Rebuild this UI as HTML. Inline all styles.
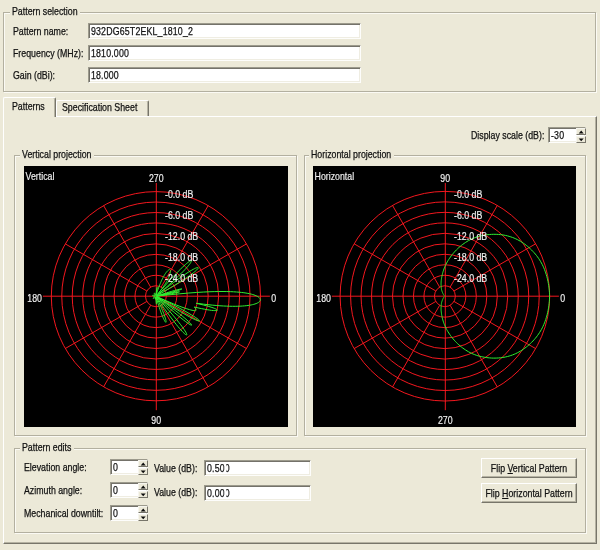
<!DOCTYPE html>
<html><head><meta charset="utf-8"><title>Antenna pattern</title>
<style>
html,body{margin:0;padding:0}
body{width:600px;height:550px;background:#ECE9D8;position:relative;overflow:hidden;font-family:"Liberation Sans",sans-serif;font-size:10.5px;color:#111;-webkit-text-stroke:0.25px #111}
div,span,svg{position:absolute;box-sizing:border-box}
.lab{height:12px;line-height:12px;white-space:nowrap;transform:scaleX(0.838);transform-origin:0 50%}
.grp{border:1px solid #b3b0a0;box-shadow:1px 1px 0 #fbfaf4, inset 1px 1px 0 #fbfaf4}
.gl{height:12px;line-height:12px;padding:0 2px;background:#ECE9D8;white-space:nowrap}
.gl b{font-weight:normal;position:absolute;left:2px;top:0;transform:scaleX(0.838);transform-origin:0 50%;white-space:nowrap}
.sunk{background:#fff;border-top:1px solid #9c9a8c;border-left:1px solid #9c9a8c;border-right:1px solid #fdfdfb;border-bottom:1px solid #fdfdfb;box-shadow:inset 1px 1px 0 #74726a, inset -1px -1px 0 #efede2}
.it{left:2px;top:0.8px;bottom:0;margin:auto;height:12px;line-height:12px;white-space:nowrap;letter-spacing:0.2px;transform:scaleX(0.838);transform-origin:0 50%}
.ud{right:-1px;width:10.5px;height:7.2px;background:#ECE9D8;border-top:1px solid #f6f5ee;border-left:1px solid #f6f5ee;border-right:1px solid #77756a;border-bottom:1px solid #77756a}
.ud svg{left:0;top:0}
.it b{position:relative;font-weight:normal}
.it b i{position:absolute;left:-0.5px;top:0;bottom:0;width:2.2px;background:#fff}
.btn{background:#ECE9D8;border-top:1px solid #fff;border-left:1px solid #fff;border-right:1px solid #77756a;border-bottom:1px solid #77756a;box-shadow:inset -1px -1px 0 #b5b2a2}
.btn span{left:-20px;right:-20px;top:0;bottom:0;margin:auto;height:12px;line-height:12px;text-align:center;white-space:nowrap;transform:scaleX(0.838)}
u{text-decoration:underline;text-underline-offset:1px}
.plot{display:block}
svg text{font-family:"Liberation Sans",sans-serif}
.panel{left:3px;top:116px;width:594px;height:428px;border-top:1px solid #fff;border-left:1px solid #fff;border-right:1px solid #77756a;border-bottom:1px solid #77756a;box-shadow:inset -1px -1px 0 #b5b2a2}
.tab{background:#ECE9D8;border-top:1px solid #fff;border-left:1px solid #fff;border-right:1px solid #77756a;box-shadow:inset -1px 0 0 #b5b2a2;border-radius:2px 2px 0 0}
.tab span{white-space:nowrap;height:12px;line-height:12px;transform:scaleX(0.838);transform-origin:0 50%}
</style></head><body><div id="w" style="left:0;top:0;width:600px;height:550px;will-change:transform">
<div class="grp" style="left:3px;top:12px;width:593px;height:80px"></div><div class="gl" style="left:10px;top:5px;width:70px"><b>Pattern selection</b></div>
<div class="lab" style="left:13px;top:25px;">Pattern name:</div>
<div class="lab" style="left:13px;top:47px;">Frequency (MHz):</div>
<div class="lab" style="left:13px;top:69px;">Gain (dBi):</div>
<div class="sunk" style="left:88px;top:23px;width:273px;height:16px"><span class="it">932DG65T2EKL_1810_2</span></div>
<div class="sunk" style="left:88px;top:45px;width:273px;height:16px"><span class="it">1810.000</span></div>
<div class="sunk" style="left:88px;top:67px;width:273px;height:16px"><span class="it">18.000</span></div>
<div class="panel"></div>
<div class="tab" style="left:56px;top:100px;width:93px;height:16px"><span style="left:5px;top:-0.5px">Specification Sheet</span></div>
<div class="tab" style="left:3px;top:97px;width:53px;height:20px"><span style="left:8px;top:2px">Patterns</span></div>
<div class="lab" style="left:471px;top:128.5px;">Display scale (dB):</div>
<div class="sunk" style="left:548px;top:127px;width:38px;height:16px"><span class="it">-30</span><div class="ud" style="top:0px"><svg width="9" height="6" viewBox="0 0 9 6"><path d="M1.7 4.4L4.2 1.6L6.7 4.4Z" fill="#0a0a0a"/></svg></div><div class="ud" style="bottom:-1px"><svg width="9" height="6" viewBox="0 0 9 6"><path d="M1.7 1.5L4.2 4.3L6.7 1.5Z" fill="#0a0a0a"/></svg></div></div>
<div class="grp" style="left:14px;top:155px;width:283px;height:281px"></div><div class="gl" style="left:20px;top:148px;width:74px"><b>Vertical projection</b></div>
<div class="grp" style="left:304px;top:155px;width:282px;height:281px"></div><div class="gl" style="left:308.5px;top:148px;width:85px"><b>Horizontal projection</b></div>
<svg class="plot" style="left:24px;top:166px" width="264" height="261" viewBox="0 0 264 261">
<rect width="264" height="261" fill="#000"/>
<g fill="none" stroke="#ff1820" stroke-width="0.95">
<circle cx="131.90" cy="130.20" r="10.46"/>
<circle cx="131.90" cy="130.20" r="20.92"/>
<circle cx="131.90" cy="130.20" r="31.38"/>
<circle cx="131.90" cy="130.20" r="41.84"/>
<circle cx="131.90" cy="130.20" r="52.30"/>
<circle cx="131.90" cy="130.20" r="62.76"/>
<circle cx="131.90" cy="130.20" r="73.22"/>
<circle cx="131.90" cy="130.20" r="83.68"/>
<circle cx="131.90" cy="130.20" r="94.14"/>
<circle cx="131.90" cy="130.20" r="104.60"/>
<path d="M18.90 130.20H245.90M132.30 17.00V244.20"/>
<path d="M140.96 124.97L222.49 77.90M137.13 121.14L184.20 39.61M126.67 121.14L79.60 39.61M122.84 124.97L41.31 77.90M122.84 135.43L41.31 182.50M126.67 139.26L79.60 220.79M137.13 139.26L184.20 220.79M140.96 135.43L222.49 182.50"/>
</g>
<path d="M129.90 130.20L130.44 130.28L130.91 130.30L131.11 130.33L131.12 130.37L131.13 130.41L131.14 130.45L130.80 130.62L130.36 130.89L129.91 131.21L129.52 131.57L129.25 131.92L129.13 132.21L129.18 132.40L129.40 132.46L129.74 132.36L130.15 132.14L130.59 131.82L131.00 131.44L131.32 131.09L131.50 130.89L131.54 130.91L131.57 130.93L131.61 130.95L131.55 131.26L131.48 131.76L131.45 132.31L131.48 132.85L131.57 133.30L131.86 131.00L131.86 131.00L131.87 131.00L131.87 131.00L131.87 131.00L131.88 131.00L131.88 131.00L131.88 131.00L131.89 131.00L131.89 131.00L131.89 131.00L131.90 131.00L131.90 131.00L131.90 131.00L131.91 131.00L131.91 131.00L131.91 131.00L131.92 131.00L131.92 131.00L131.95 132.00L132.01 133.35L132.07 134.52L132.13 135.52L132.20 136.35L132.26 137.02L132.32 137.53L132.37 137.89L132.42 138.11L132.46 138.18L132.49 138.11L132.50 137.89L132.51 137.52L132.49 137.00L132.46 136.33L132.41 135.50L132.33 134.50L132.23 133.34L132.10 131.99L131.99 130.99L131.99 130.99L132.00 130.99L132.00 130.99L132.00 130.99L132.01 130.99L132.01 130.99L132.01 130.99L132.02 130.99L132.02 130.99L132.03 130.99L132.03 130.99L132.03 130.99L132.04 130.99L132.04 130.99L132.04 130.99L132.05 130.99L132.05 130.99L132.05 130.99L132.06 130.98L132.06 130.98L132.06 130.98L132.07 130.98L132.07 130.98L132.07 130.98L132.08 130.98L132.08 130.98L132.08 130.98L132.09 130.98L132.09 130.98L132.09 130.98L132.10 130.98L132.10 130.97L132.10 130.97L132.11 130.97L132.11 130.97L132.11 130.97L132.46 132.18L133.23 134.83L133.96 137.27L134.66 139.52L135.33 141.59L135.96 143.49L136.57 145.23L137.14 146.82L137.68 148.26L138.19 149.57L138.68 150.75L139.13 151.80L139.55 152.74L139.94 153.56L140.30 154.26L140.63 154.86L140.93 155.36L141.20 155.75L141.43 156.04L141.64 156.24L141.80 156.34L141.93 156.34L142.03 156.25L142.09 156.06L142.11 155.78L142.09 155.41L142.02 154.94L141.91 154.37L141.76 153.70L141.55 152.94L141.29 152.07L140.98 151.09L140.61 150.00L140.18 148.81L139.69 147.49L139.12 146.05L138.49 144.49L137.77 142.79L136.97 140.96L136.08 138.97L135.10 136.83L134.01 134.53L132.81 132.04L132.26 130.92L132.26 130.91L132.26 130.91L132.27 130.91L132.27 130.91L132.27 130.91L132.28 130.91L132.28 130.90L132.28 130.90L132.28 130.90L132.29 130.90L132.29 130.90L132.29 130.90L132.30 130.89L132.30 130.89L132.30 130.89L132.31 130.89L132.31 130.89L132.31 130.89L132.32 130.88L132.32 130.88L132.32 130.88L132.32 130.88L132.33 130.88L132.33 130.87L132.33 130.87L132.34 130.87L132.34 130.87L132.34 130.87L132.34 130.87L133.54 132.63L137.07 137.79L140.24 142.33L143.09 146.34L145.69 149.89L148.04 153.03L150.17 155.82L152.11 158.27L153.85 160.42L155.43 162.29L156.83 163.89L158.08 165.26L159.17 166.39L160.12 167.31L160.92 168.02L161.58 168.53L162.10 168.85L162.47 168.98L162.71 168.94L162.81 168.72L162.77 168.32L162.57 167.74L162.22 166.98L161.71 166.04L161.03 164.91L160.17 163.59L159.12 162.07L157.87 160.34L156.40 158.39L154.70 156.20L152.75 153.77L150.52 151.06L147.98 148.06L145.11 144.74L141.84 141.05L138.13 136.94L133.90 132.34L132.45 130.78L132.45 130.78L132.45 130.78L132.46 130.78L132.46 130.77L132.46 130.77L132.46 130.77L132.47 130.77L132.47 130.76L132.47 130.76L132.47 130.76L132.48 130.76L132.48 130.75L132.48 130.75L132.48 130.75L132.49 130.75L132.49 130.74L132.49 130.74L135.40 133.38L141.25 138.62L146.15 142.92L150.31 146.49L153.86 149.45L156.88 151.92L159.45 153.94L161.61 155.58L163.41 156.87L164.86 157.86L166.00 158.56L166.83 159.00L167.38 159.19L167.65 159.15L167.63 158.88L167.33 158.38L166.73 157.65L165.80 156.69L164.54 155.47L162.90 153.99L160.85 152.21L158.34 150.12L155.30 147.67L151.66 144.82L147.30 141.49L142.08 137.59L135.74 132.97L132.55 130.66L132.55 130.66L132.56 130.66L132.56 130.66L132.56 130.65L132.56 130.65L132.56 130.65L132.57 130.64L132.57 130.64L134.31 131.78L141.15 136.20L146.93 139.87L151.89 142.94L156.18 145.52L159.89 147.69L163.09 149.50L165.85 151.00L168.20 152.23L170.18 153.20L171.82 153.95L173.13 154.48L174.13 154.83L174.84 154.99L175.26 154.98L175.40 154.81L175.24 154.47L174.80 153.98L174.06 153.33L172.99 152.51L171.58 151.52L169.81 150.36L167.64 149.00L165.03 147.45L161.93 145.67L158.29 143.65L154.01 141.35L149.00 138.73L143.10 135.72L136.06 132.23L132.62 130.55L132.62 130.54L132.62 130.54L132.63 130.54L132.63 130.53L132.63 130.53L137.50 132.72L142.03 134.71L146.01 136.41L149.54 137.87L152.68 139.13L155.48 140.21L157.98 141.14L160.21 141.93L162.20 142.59L163.96 143.15L165.51 143.61L166.87 143.97L168.05 144.26L169.06 144.46L169.91 144.60L170.61 144.67L171.16 144.68L171.56 144.64L171.83 144.54L171.96 144.39L172.01 144.21L172.03 144.02L172.03 143.82L172.00 143.62L171.94 143.40L171.86 143.18L171.75 142.96L171.61 142.72L171.44 142.48L171.24 142.23L171.01 141.97L170.75 141.71L170.46 141.44L170.13 141.16L170.31 141.03L174.02 141.88L177.39 142.60L180.44 143.20L183.15 143.69L185.55 144.07L187.62 144.35L189.37 144.53L190.80 144.61L191.91 144.61L192.71 144.52L193.18 144.35L193.34 144.10L193.16 143.78L192.64 143.39L191.78 142.93L190.58 142.40L189.02 141.82L187.12 141.18L184.86 140.50L182.25 139.76L179.28 138.98L175.94 138.16L172.22 137.31L174.47 137.51L179.42 138.15L184.00 138.68L188.25 139.13L192.22 139.48L195.93 139.77L199.40 139.99L202.65 140.14L205.70 140.24L208.56 140.29L211.24 140.29L213.75 140.25L216.10 140.17L218.30 140.04L220.34 139.89L222.25 139.70L224.01 139.48L225.65 139.23L227.16 138.95L228.54 138.65L229.80 138.33L230.94 137.99L231.97 137.64L232.88 137.26L233.68 136.87L234.38 136.47L234.97 136.05L235.45 135.63L235.83 135.19L236.10 134.75L236.27 134.30L236.34 133.85L236.30 133.39L236.16 132.93L235.92 132.47L235.57 132.01L235.12 131.55L234.55 131.10L233.88 130.64L233.09 130.20L232.17 129.76L231.14 129.33L229.98 128.92L228.68 128.51L227.24 128.12L225.65 127.75L223.90 127.39L221.99 127.05L219.91 126.74L217.63 126.46L215.16 126.20L212.46 125.98L209.53 125.79L206.33 125.65L202.84 125.55L199.03 125.51L194.83 125.52L190.20 125.61L185.04 125.78L179.22 126.06L172.57 126.46L164.76 127.04L155.26 127.85L142.94 129.04L132.70 130.11L132.69 130.11L132.69 130.11L132.69 130.10L132.69 130.10L132.69 130.10L132.69 130.09L132.69 130.09L132.69 130.09L132.69 130.08L136.40 129.51L143.02 128.44L147.65 127.63L150.88 127.02L153.08 126.56L154.49 126.22L155.26 125.98L155.50 125.83L155.23 125.77L154.42 125.82L152.98 126.01L150.76 126.36L147.53 126.95L142.92 127.86L136.35 129.23L132.68 130.03L132.68 130.02L132.68 130.02L132.68 130.02L138.29 128.67L143.92 127.26L148.19 126.14L151.43 125.24L153.85 124.52L155.61 123.96L156.82 123.52L157.56 123.20L157.89 122.99L157.82 122.89L157.35 122.90L156.46 123.04L155.10 123.33L153.18 123.79L150.59 124.48L147.18 125.46L142.72 126.79L136.85 128.62L132.66 129.95L132.66 129.95L132.66 129.95L132.66 129.94L132.66 129.94L132.66 129.94L132.65 129.93L132.65 129.93L132.65 129.93L132.65 129.92L132.65 129.92L132.65 129.92L132.65 129.91L132.65 129.91L132.64 129.91L132.64 129.90L132.64 129.90L132.64 129.90L132.64 129.89L132.64 129.89L132.64 129.89L132.64 129.88L132.63 129.88L132.63 129.88L132.63 129.87L132.63 129.87L132.63 129.87L132.63 129.87L132.63 129.86L132.62 129.86L132.62 129.86L132.62 129.85L132.62 129.85L132.62 129.85L132.62 129.84L132.61 129.84L132.61 129.84L132.61 129.83L132.61 129.83L132.61 129.83L132.61 129.82L132.60 129.82L132.60 129.82L132.60 129.82L132.60 129.81L132.60 129.81L134.84 128.54L141.35 124.80L146.75 121.63L151.31 118.88L155.21 116.47L158.57 114.34L161.46 112.44L163.96 110.75L166.10 109.24L167.93 107.90L169.49 106.71L170.78 105.67L171.85 104.75L172.70 103.96L173.35 103.28L173.82 102.72L174.10 102.27L174.22 101.92L174.18 101.68L173.98 101.55L173.61 101.53L173.08 101.63L172.39 101.85L171.51 102.20L170.46 102.69L169.21 103.34L167.76 104.15L166.07 105.14L164.14 106.34L161.94 107.76L159.44 109.45L156.60 111.42L153.36 113.73L149.67 116.44L145.41 119.65L140.45 123.46L134.54 128.10L132.52 129.70L132.52 129.70L132.52 129.69L132.52 129.69L132.52 129.69L132.51 129.69L132.51 129.68L133.70 128.66L139.39 123.75L144.08 119.61L148.04 116.04L151.41 112.94L154.30 110.20L156.79 107.79L158.92 105.66L160.74 103.78L162.28 102.11L163.58 100.66L164.66 99.38L165.53 98.28L166.22 97.35L166.73 96.56L167.09 95.92L167.29 95.43L167.34 95.07L167.26 94.84L167.03 94.76L166.67 94.81L166.18 95.01L165.54 95.37L164.75 95.88L163.82 96.57L162.72 97.44L161.44 98.52L159.99 99.82L158.32 101.36L156.44 103.18L154.31 105.31L151.90 107.80L149.16 110.69L146.06 114.06L142.49 118.02L138.35 122.71L133.44 128.40L133.89 127.85L134.62 126.95L135.33 126.07L136.02 125.21L136.67 124.36L137.30 123.53L137.91 122.71L138.49 121.92L139.04 121.14L139.58 120.37L140.09 119.62L140.58 118.89L141.04 118.18L141.48 117.48L141.91 116.80L142.31 116.14L142.69 115.49L143.05 114.86L143.39 114.24L143.71 113.64L144.01 113.06L144.29 112.50L144.56 111.95L144.81 111.42L145.04 110.91L145.25 110.41L145.44 109.93L145.62 109.47L145.79 109.02L145.93 108.59L146.06 108.18L146.18 107.78L146.28 107.41L146.37 107.05L146.44 106.70L146.50 106.38L146.54 106.07L146.57 105.78L146.59 105.51L146.59 105.26L146.59 105.02L146.56 104.80L146.53 104.60L146.49 104.42L146.43 104.25L146.36 104.11L146.28 103.98L146.19 103.87L146.09 103.78L145.98 103.71L145.86 103.66L145.73 103.63L145.59 103.63L145.43 103.64L145.26 103.68L145.09 103.75L144.90 103.83L144.71 103.94L144.50 104.08L144.29 104.23L144.06 104.41L143.83 104.62L143.59 104.84L143.34 105.10L143.08 105.38L142.82 105.68L142.55 106.01L142.27 106.36L141.98 106.74L141.69 107.14L141.39 107.57L141.08 108.03L140.77 108.51L140.46 109.02L140.13 109.56L139.81 110.13L139.48 110.72L139.14 111.34L138.80 111.99L138.46 112.66L138.11 113.37L137.76 114.10L137.41 114.87L137.05 115.66L136.69 116.48L136.33 117.34L135.97 118.22L135.60 119.14L135.24 120.09L134.87 121.06L134.50 122.08L134.13 123.12L133.76 124.20L133.40 125.31L133.03 126.45L132.66 127.63L132.30 128.84L132.12 129.43L132.12 129.43L132.11 129.43L132.11 129.43L132.11 129.43L132.10 129.43L132.10 129.43L132.10 129.42L132.09 129.42L132.09 129.42L132.09 129.42L132.08 129.42L132.08 129.42L132.08 129.42L132.07 129.42L132.07 129.42L132.07 129.42L132.06 129.42L132.06 129.42L132.06 129.42L132.05 129.41L132.05 129.41L132.13 128.97L132.40 127.45L132.62 126.11L132.80 124.95L132.94 123.96L133.05 123.14L133.12 122.47L133.17 121.95L133.19 121.59L133.18 121.37L133.15 121.29L133.10 121.35L133.04 121.57L132.95 121.92L132.85 122.43L132.74 123.09L132.62 123.92L132.48 124.91L132.33 126.07L132.18 127.42L132.02 128.96L131.97 129.40L131.97 129.40L131.97 129.40L131.96 129.40L131.96 129.40L131.96 129.40L131.95 129.40L131.95 129.40L131.95 129.40L131.94 129.40L131.94 129.40L131.93 129.40L131.93 129.40L131.93 129.40L131.92 129.40L131.92 129.40L131.92 129.40L131.91 129.40L131.91 129.40L131.91 129.40L131.90 129.40L131.90 129.40L131.90 129.40L131.89 129.40L131.89 129.40L131.89 129.40L131.88 129.40L131.88 129.40L131.88 129.40L131.87 129.40L131.87 129.40L131.87 129.40L131.86 129.40L131.86 129.40L131.85 129.40L131.85 129.40L131.85 129.40L131.84 129.40L131.84 129.40L131.84 129.40L131.83 129.40L131.83 129.40L131.74 129.05L131.58 128.57L131.37 128.06L131.10 127.59L130.82 127.24L130.56 127.05L130.37 127.06L130.26 127.24L130.27 127.59L130.39 128.04L130.60 128.54L130.88 129.02L131.15 129.43L131.31 129.65L131.29 129.69L131.26 129.72L131.24 129.75L130.96 129.63L130.50 129.46L129.97 129.30L129.44 129.20L128.97 129.19L128.64 129.27L128.49 129.41L128.54 129.61L128.79 129.82L129.20 130.01L129.72 130.16Z" fill="none" stroke="#30f030" stroke-width="1.0" stroke-linejoin="round"/>
<g fill="#f0f0f0" stroke="#f0f0f0" stroke-width="0.18" font-size="10.5">
<text transform="translate(1.60 14.00) scale(0.838 1)" text-anchor="start">Vertical</text>
<text transform="translate(132.20 15.80) scale(0.838 1)" text-anchor="middle">270</text>
<text transform="translate(132.20 257.70) scale(0.838 1)" text-anchor="middle">90</text>
<text transform="translate(247.20 136.00) scale(0.838 1)" text-anchor="start">0</text>
<text transform="translate(18.00 136.00) scale(0.838 1)" text-anchor="end">180</text>
<text transform="translate(141.00 32.30) scale(0.838 1)" text-anchor="start">-0.0 dB</text>
<text transform="translate(141.00 53.22) scale(0.838 1)" text-anchor="start">-6.0 dB</text>
<text transform="translate(141.00 74.14) scale(0.838 1)" text-anchor="start">-12.0 dB</text>
<text transform="translate(141.00 95.06) scale(0.838 1)" text-anchor="start">-18.0 dB</text>
<text transform="translate(141.00 115.98) scale(0.838 1)" text-anchor="start">-24.0 dB</text>
</g></svg>
<svg class="plot" style="left:313px;top:166px" width="263" height="261" viewBox="0 0 263 261">
<rect width="263" height="261" fill="#000"/>
<g fill="none" stroke="#ff1820" stroke-width="0.95">
<circle cx="131.90" cy="130.20" r="10.48"/>
<circle cx="131.90" cy="130.20" r="20.96"/>
<circle cx="131.90" cy="130.20" r="31.44"/>
<circle cx="131.90" cy="130.20" r="41.92"/>
<circle cx="131.90" cy="130.20" r="52.40"/>
<circle cx="131.90" cy="130.20" r="62.88"/>
<circle cx="131.90" cy="130.20" r="73.36"/>
<circle cx="131.90" cy="130.20" r="83.84"/>
<circle cx="131.90" cy="130.20" r="94.32"/>
<circle cx="131.90" cy="130.20" r="104.80"/>
<path d="M18.90 130.20H245.90M132.30 17.00V244.20"/>
<path d="M140.98 124.96L222.66 77.80M137.14 121.12L184.30 39.44M126.66 121.12L79.50 39.44M122.82 124.96L41.14 77.80M122.82 135.44L41.14 182.60M126.66 139.28L79.50 220.96M137.14 139.28L184.30 220.96M140.98 135.44L222.66 182.60"/>
</g>
<path d="M131.40 130.20L131.40 130.21L131.39 130.22L131.39 130.23L131.39 130.24L131.39 130.24L131.39 130.25L131.39 130.26L131.39 130.27L131.38 130.28L131.38 130.29L131.38 130.30L131.38 130.31L131.38 130.32L131.38 130.33L131.38 130.34L131.38 130.35L131.38 130.36L131.38 130.37L131.38 130.38L131.38 130.39L131.38 130.40L131.39 130.41L131.39 130.42L131.39 130.43L131.39 130.44L131.39 130.45L131.39 130.46L131.40 130.47L131.40 130.48L131.40 130.49L131.40 130.50L131.41 130.51L131.41 130.52L131.42 130.53L131.42 130.54L131.42 130.55L131.41 130.57L131.38 130.60L131.34 130.65L131.28 130.72L131.21 130.80L131.13 130.89L131.04 131.01L130.93 131.14L130.82 131.28L130.71 131.44L130.60 131.59L130.50 131.76L130.40 131.92L130.31 132.09L130.23 132.26L130.13 132.46L130.02 132.70L129.89 132.97L129.75 133.26L129.61 133.60L129.45 133.97L129.30 134.37L129.13 134.81L128.97 135.28L128.82 135.76L128.68 136.25L128.56 136.75L128.46 137.25L128.38 137.75L128.31 138.27L128.25 138.80L128.20 139.37L128.15 139.97L128.11 140.61L128.09 141.28L128.07 141.98L128.07 142.72L128.09 143.50L128.12 144.30L128.18 145.13L128.26 145.95L128.37 146.82L128.49 147.72L128.64 148.66L128.82 149.64L129.03 150.66L129.26 151.71L129.52 152.80L129.82 153.92L130.16 155.08L130.54 156.24L130.95 157.41L131.40 158.59L131.90 159.78L132.44 160.97L133.02 162.17L133.64 163.38L134.30 164.58L135.01 165.79L135.77 167.00L136.57 168.21L137.41 169.41L138.30 170.62L139.24 171.82L140.22 173.01L141.25 174.20L142.33 175.37L143.45 176.54L144.62 177.69L145.84 178.81L147.10 179.90L148.39 180.96L149.73 181.99L151.12 182.99L152.54 183.96L154.00 184.89L155.49 185.77L157.00 186.58L158.54 187.34L160.11 188.03L161.69 188.67L163.30 189.25L164.92 189.76L166.55 190.22L168.20 190.61L169.86 190.95L171.55 191.26L173.26 191.52L174.99 191.74L176.74 191.92L178.50 192.04L180.26 192.10L182.03 192.10L183.80 192.05L185.58 191.95L187.36 191.79L189.13 191.58L190.90 191.30L192.65 190.95L194.38 190.54L196.10 190.07L197.80 189.54L199.48 188.95L201.14 188.30L202.77 187.59L204.35 186.81L205.91 185.97L207.44 185.08L208.94 184.15L210.42 183.16L211.88 182.14L213.30 181.06L214.68 179.94L216.03 178.77L217.35 177.57L218.64 176.32L219.89 175.03L221.11 173.71L222.30 172.35L223.45 170.96L224.53 169.52L225.57 168.05L226.57 166.54L227.52 165.00L228.42 163.43L229.27 161.84L230.07 160.21L230.80 158.56L231.48 156.88L232.12 155.19L232.71 153.47L233.26 151.75L233.77 150.00L234.24 148.24L234.65 146.47L235.02 144.69L235.36 142.90L235.66 141.11L235.92 139.30L236.15 137.49L236.32 135.67L236.45 133.85L236.52 132.03L236.54 130.20L236.52 128.37L236.45 126.55L236.32 124.73L236.15 122.91L235.92 121.10L235.66 119.29L235.36 117.50L235.02 115.71L234.65 113.93L234.24 112.16L233.77 110.40L233.26 108.65L232.71 106.93L232.12 105.21L231.48 103.52L230.80 101.84L230.07 100.19L229.27 98.56L228.42 96.97L227.52 95.40L226.57 93.86L225.57 92.35L224.53 90.88L223.45 89.44L222.30 88.05L221.11 86.69L219.89 85.37L218.64 84.08L217.35 82.83L216.03 81.63L214.68 80.46L213.30 79.34L211.88 78.26L210.42 77.24L208.94 76.25L207.44 75.32L205.91 74.43L204.35 73.59L202.77 72.81L201.14 72.10L199.48 71.45L197.80 70.86L196.10 70.33L194.38 69.86L192.65 69.45L190.90 69.10L189.13 68.82L187.36 68.61L185.58 68.45L183.80 68.35L182.03 68.30L180.26 68.30L178.50 68.36L176.74 68.48L174.99 68.66L173.26 68.88L171.55 69.14L169.86 69.45L168.20 69.79L166.55 70.18L164.92 70.64L163.30 71.15L161.69 71.73L160.11 72.37L158.54 73.06L157.00 73.82L155.49 74.63L154.00 75.51L152.54 76.44L151.12 77.41L149.73 78.41L148.39 79.44L147.10 80.50L145.84 81.59L144.62 82.71L143.45 83.86L142.33 85.03L141.25 86.20L140.22 87.39L139.24 88.58L138.30 89.78L137.41 90.99L136.57 92.19L135.77 93.40L135.01 94.61L134.30 95.82L133.64 97.02L133.02 98.23L132.44 99.43L131.90 100.62L131.40 101.81L130.95 102.99L130.54 104.16L130.16 105.32L129.82 106.48L129.52 107.60L129.26 108.69L129.03 109.74L128.82 110.76L128.64 111.74L128.49 112.68L128.37 113.58L128.26 114.45L128.18 115.27L128.12 116.10L128.09 116.90L128.07 117.68L128.07 118.42L128.09 119.12L128.11 119.79L128.15 120.43L128.20 121.03L128.25 121.60L128.31 122.13L128.38 122.65L128.46 123.15L128.56 123.65L128.68 124.15L128.82 124.64L128.97 125.12L129.13 125.59L129.30 126.03L129.45 126.43L129.61 126.80L129.75 127.14L129.89 127.43L130.02 127.70L130.13 127.94L130.23 128.14L130.31 128.31L130.40 128.48L130.50 128.64L130.60 128.81L130.71 128.96L130.82 129.12L130.93 129.26L131.04 129.39L131.13 129.51L131.21 129.60L131.28 129.68L131.34 129.75L131.38 129.80L131.41 129.83L131.42 129.85L131.42 129.86L131.42 129.87L131.41 129.88L131.41 129.89L131.40 129.90L131.40 129.91L131.40 129.92L131.40 129.93L131.39 129.94L131.39 129.95L131.39 129.96L131.39 129.97L131.39 129.98L131.39 129.99L131.38 130.00L131.38 130.01L131.38 130.02L131.38 130.03L131.38 130.04L131.38 130.05L131.38 130.06L131.38 130.07L131.38 130.08L131.38 130.09L131.38 130.10L131.38 130.11L131.38 130.12L131.39 130.13L131.39 130.14L131.39 130.15L131.39 130.16L131.39 130.16L131.39 130.17L131.39 130.18L131.40 130.19Z" fill="none" stroke="#30f030" stroke-width="1.0" stroke-linejoin="round"/>
<g fill="#f0f0f0" stroke="#f0f0f0" stroke-width="0.18" font-size="10.5">
<text transform="translate(1.60 14.00) scale(0.838 1)" text-anchor="start">Horizontal</text>
<text transform="translate(132.20 15.80) scale(0.838 1)" text-anchor="middle">90</text>
<text transform="translate(132.20 257.70) scale(0.838 1)" text-anchor="middle">270</text>
<text transform="translate(247.20 136.00) scale(0.838 1)" text-anchor="start">0</text>
<text transform="translate(18.00 136.00) scale(0.838 1)" text-anchor="end">180</text>
<text transform="translate(141.00 32.10) scale(0.838 1)" text-anchor="start">-0.0 dB</text>
<text transform="translate(141.00 53.06) scale(0.838 1)" text-anchor="start">-6.0 dB</text>
<text transform="translate(141.00 74.02) scale(0.838 1)" text-anchor="start">-12.0 dB</text>
<text transform="translate(141.00 94.98) scale(0.838 1)" text-anchor="start">-18.0 dB</text>
<text transform="translate(141.00 115.94) scale(0.838 1)" text-anchor="start">-24.0 dB</text>
</g></svg>
<div class="grp" style="left:14px;top:448px;width:572px;height:85px"></div><div class="gl" style="left:20px;top:441px;width:54px"><b>Pattern edits</b></div>
<div class="lab" style="left:24px;top:461px;">Elevation angle:</div>
<div class="lab" style="left:24px;top:484px;">Azimuth angle:</div>
<div class="lab" style="left:24px;top:506.5px;">Mechanical downtilt:</div>
<div class="sunk" style="left:110px;top:459px;width:38px;height:16px"><span class="it">0</span><div class="ud" style="top:0px"><svg width="9" height="6" viewBox="0 0 9 6"><path d="M1.7 4.4L4.2 1.6L6.7 4.4Z" fill="#0a0a0a"/></svg></div><div class="ud" style="bottom:-1px"><svg width="9" height="6" viewBox="0 0 9 6"><path d="M1.7 1.5L4.2 4.3L6.7 1.5Z" fill="#0a0a0a"/></svg></div></div>
<div class="sunk" style="left:110px;top:482px;width:38px;height:16px"><span class="it">0</span><div class="ud" style="top:0px"><svg width="9" height="6" viewBox="0 0 9 6"><path d="M1.7 4.4L4.2 1.6L6.7 4.4Z" fill="#0a0a0a"/></svg></div><div class="ud" style="bottom:-1px"><svg width="9" height="6" viewBox="0 0 9 6"><path d="M1.7 1.5L4.2 4.3L6.7 1.5Z" fill="#0a0a0a"/></svg></div></div>
<div class="sunk" style="left:110px;top:505px;width:38px;height:16px"><span class="it">0</span><div class="ud" style="top:0px"><svg width="9" height="6" viewBox="0 0 9 6"><path d="M1.7 4.4L4.2 1.6L6.7 4.4Z" fill="#0a0a0a"/></svg></div><div class="ud" style="bottom:-1px"><svg width="9" height="6" viewBox="0 0 9 6"><path d="M1.7 1.5L4.2 4.3L6.7 1.5Z" fill="#0a0a0a"/></svg></div></div>
<div class="lab" style="left:154.4px;top:462px;">Value (dB):</div>
<div class="lab" style="left:154.4px;top:486.4px;">Value (dB):</div>
<div class="sunk" style="left:204px;top:460px;width:107px;height:16px"><span class="it">0.50<b>0<i></i></b></span></div>
<div class="sunk" style="left:204px;top:485px;width:107px;height:16px"><span class="it">0.00<b>0<i></i></b></span></div>
<div class="btn" style="left:481px;top:458px;width:96px;height:20px"><span>Flip <u>V</u>ertical Pattern</span></div>
<div class="btn" style="left:481px;top:483px;width:96px;height:20px"><span>Flip <u>H</u>orizontal Pattern</span></div>
</div></body></html>
